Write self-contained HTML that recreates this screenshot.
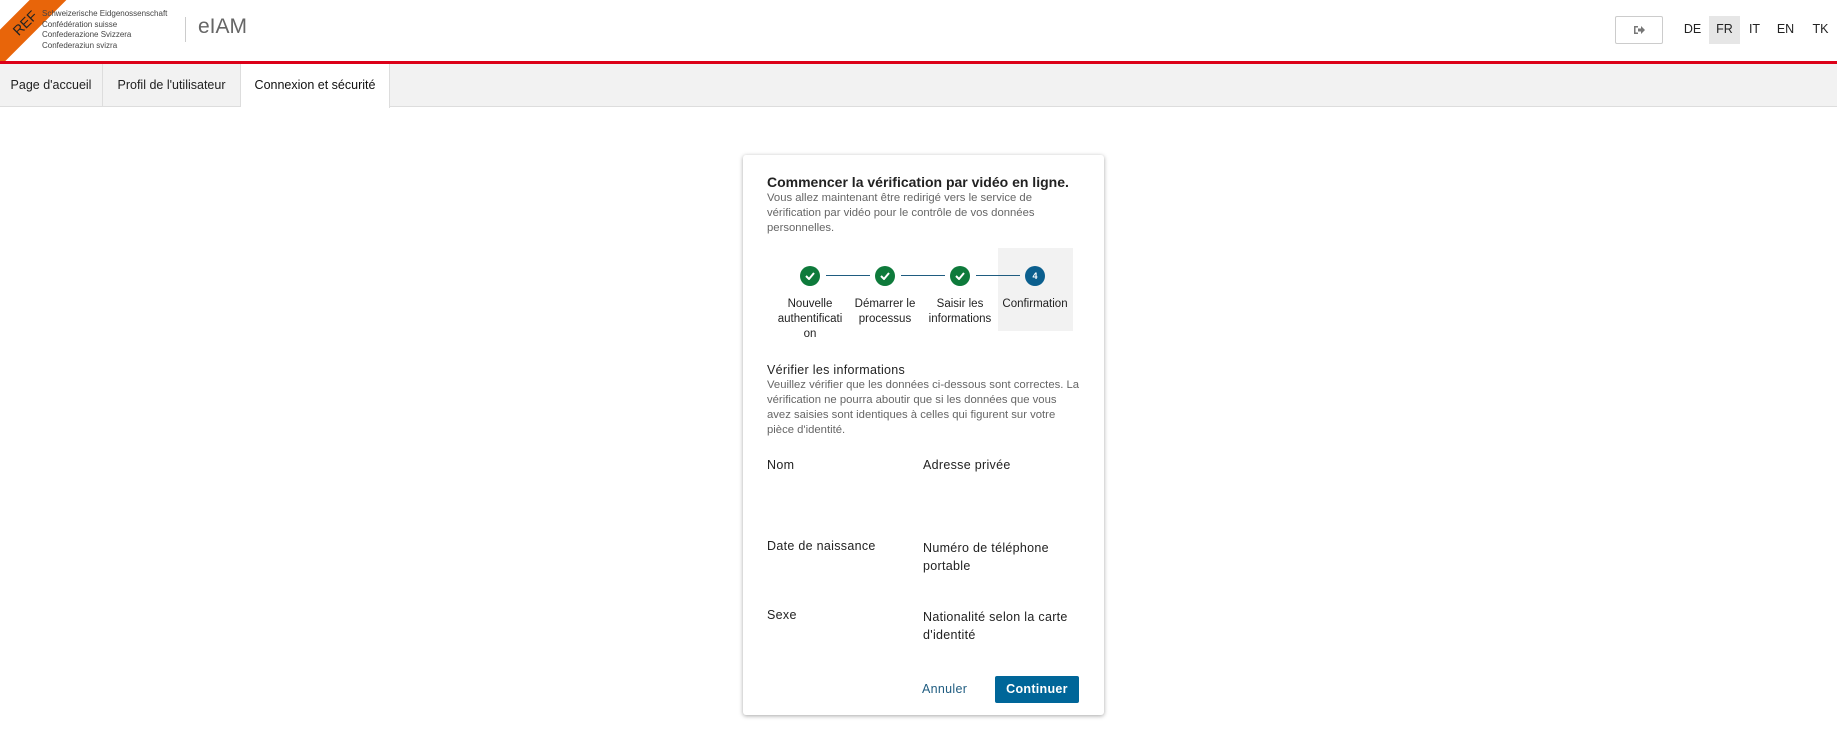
<!DOCTYPE html>
<html><head><meta charset="utf-8"><style>
*{box-sizing:border-box;margin:0;padding:0}
body{width:1837px;height:739px;background:#fff;font-family:"Liberation Sans",sans-serif;color:#222;position:relative;overflow:hidden}
.a{position:absolute;white-space:nowrap}
.logo{left:42px;font-size:8px;color:#444;line-height:10.5px;top:9px}
.ribbon{position:absolute;left:-30px;top:10px;width:110px;height:26px;background:#e8650a;transform:rotate(-45deg);color:#222;font-size:14px;text-align:center;line-height:26px}
.tabs{position:absolute;left:0;top:64px;width:1837px;height:43px;background:#f2f2f2;border-bottom:1px solid #ddd}
.tab{position:absolute;top:0;height:43px;line-height:42px;font-size:12.5px;white-space:nowrap;text-align:center;border-right:1px solid #ddd}
.card{position:absolute;left:743px;top:155px;width:361px;height:560px;background:#fff;border-radius:3px;box-shadow:0 1px 4px rgba(0,0,0,.35)}
.g{color:#666;font-size:11.3px;line-height:15px}
.c{position:absolute;width:20px;height:20px;border-radius:50%;background:#0e7a3b;top:266px}
.c svg{position:absolute;left:5px;top:6px}
.ln{position:absolute;top:275px;height:1px;background:#1f5c80}
.lb{position:absolute;font-size:11.5px;line-height:15px;text-align:center;width:80px;top:297px}
.f{font-size:12.5px;letter-spacing:.3px}
.lang{position:absolute;top:22px;font-size:12.5px;width:31px;text-align:center}
</style></head><body>
<div class="ribbon">REF</div>
<div class="a logo">Schweizerische Eidgenossenschaft<br>Confédération suisse<br>Confederazione Svizzera<br>Confederaziun svizra</div>
<div class="a" style="left:185px;top:17px;width:1px;height:25px;background:#ccc"></div>
<div class="a" style="left:198px;top:15px;font-size:21px;color:#666">eIAM</div>
<div class="a" style="left:1615px;top:16px;width:48px;height:28px;border:1px solid #ccc;border-radius:2px"><svg style="position:absolute;left:17px;top:8px" width="12" height="10" viewBox="0 0 12 10"><path d="M1 1h4v1.5H2.5v5H5V9H1z" fill="#777"/><path d="M5 3.5h3V1l4 4-4 4V6.5H5z" fill="#777"/></svg></div>
<div class="a" style="left:1709px;top:16px;width:31px;height:28px;background:#e6e6e6"></div>
<div class="lang" style="left:1677px">DE</div>
<div class="lang" style="left:1709px">FR</div>
<div class="lang" style="left:1739px">IT</div>
<div class="lang" style="left:1770px">EN</div>
<div class="lang" style="left:1805px">TK</div>
<div class="a" style="left:0;top:61px;width:1837px;height:3px;background:#dc0018"></div>
<div class="tabs">
<div class="tab" style="left:0;width:103px">Page d'accueil</div>
<div class="tab" style="left:103px;width:138px">Profil de l'utilisateur</div>
<div class="tab" style="left:241px;width:149px;background:#fff;height:44px;color:#111">Connexion et sécurité</div>
</div>
<div class="card"></div>
<div class="a" style="left:767px;top:174px;font-size:14px;font-weight:bold;color:#222">Commencer la vérification par vidéo en ligne.</div>
<div class="a g" style="left:767px;top:191px">Vous allez maintenant être redirigé vers le service de<br>vérification par vidéo pour le contrôle de vos données<br>personnelles.</div>
<div class="a" style="left:998px;top:248px;width:75px;height:83px;background:#f2f2f2"></div>
<div class="ln" style="left:826px;width:44px"></div>
<div class="ln" style="left:901px;width:44px"></div>
<div class="ln" style="left:976px;width:44px"></div>
<div class="c" style="left:800px"><svg width="10" height="8" viewBox="0 0 10 8"><path d="M1 4l3 3 5-6" stroke="#fff" stroke-width="2" fill="none"/></svg></div>
<div class="c" style="left:875px"><svg width="10" height="8" viewBox="0 0 10 8"><path d="M1 4l3 3 5-6" stroke="#fff" stroke-width="2" fill="none"/></svg></div>
<div class="c" style="left:950px"><svg width="10" height="8" viewBox="0 0 10 8"><path d="M1 4l3 3 5-6" stroke="#fff" stroke-width="2" fill="none"/></svg></div>
<div class="c" style="left:1025px;background:#0b5f8e;color:#fff;font-size:9px;font-weight:bold;text-align:center;line-height:20px">4</div>
<div class="lb" style="left:770px">Nouvelle<br>authentificati<br>on</div>
<div class="lb" style="left:845px">Démarrer le<br>processus</div>
<div class="lb" style="left:920px">Saisir les<br>informations</div>
<div class="lb" style="left:995px">Confirmation</div>
<div class="a f" style="left:767px;top:363px">Vérifier les informations</div>
<div class="a g" style="left:767px;top:378px">Veuillez vérifier que les données ci-dessous sont correctes. La<br>vérification ne pourra aboutir que si les données que vous<br>avez saisies sont identiques à celles qui figurent sur votre<br>pièce d'identité.</div>
<div class="a f" style="left:767px;top:458px">Nom</div>
<div class="a f" style="left:923px;top:458px">Adresse privée</div>
<div class="a f" style="left:767px;top:539px">Date de naissance</div>
<div class="a f" style="left:923px;top:539px;line-height:18px">Numéro de téléphone<br>portable</div>
<div class="a f" style="left:767px;top:608px">Sexe</div>
<div class="a f" style="left:923px;top:608px;line-height:18px">Nationalité selon la carte<br>d'identité</div>
<div class="a f" style="left:922px;top:682px;color:#1f5c80">Annuler</div>
<div class="a f" style="left:995px;top:676px;width:84px;height:27px;background:#006699;color:#fff;text-align:center;line-height:27px;font-weight:bold;border-radius:2px">Continuer</div>
</body></html>
